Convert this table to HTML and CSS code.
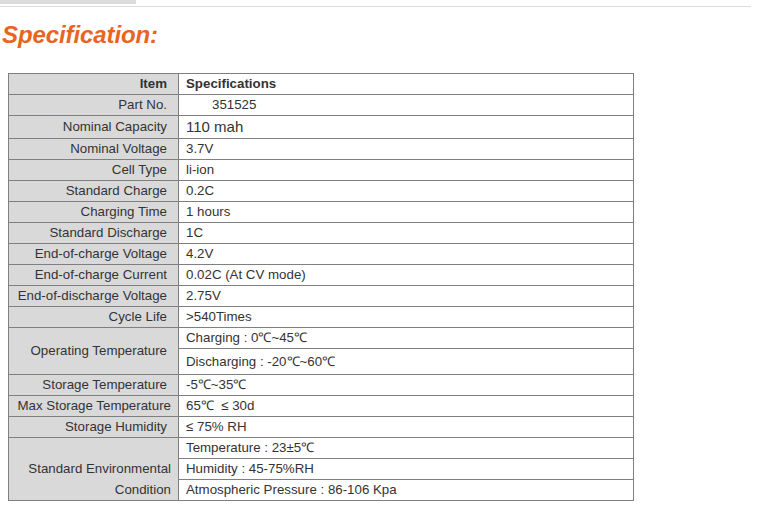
FILE: index.html
```html
<!DOCTYPE html>
<html>
<head>
<meta charset="utf-8">
<link rel="stylesheet" href="styles.css">
</head>
<body>
<div class="topbar"></div>
<div class="rule"></div>
<h2 class="title">Specification:</h2>
<table class="spec">
  <colgroup><col class="c-label"><col class="c-value"></colgroup>
  <tr class="r"><th class="lab hd">Item</th><th class="val hd">Specifications</th></tr>
  <tr class="r"><td class="lab">Part No.</td><td class="val"><span class="indent">351525</span></td></tr>
  <tr class="r-big"><td class="lab">Nominal Capacity</td><td class="val big">110 mah</td></tr>
  <tr class="r"><td class="lab">Nominal Voltage</td><td class="val">3.7V</td></tr>
  <tr class="r"><td class="lab">Cell Type</td><td class="val">li-ion</td></tr>
  <tr class="r"><td class="lab">Standard Charge</td><td class="val">0.2C</td></tr>
  <tr class="r"><td class="lab">Charging Time</td><td class="val">1 hours</td></tr>
  <tr class="r"><td class="lab">Standard Discharge</td><td class="val">1C</td></tr>
  <tr class="r"><td class="lab">End-of-charge Voltage</td><td class="val">4.2V</td></tr>
  <tr class="r"><td class="lab">End-of-charge Current</td><td class="val">0.02C (At CV mode)</td></tr>
  <tr class="r"><td class="lab">End-of-discharge Voltage</td><td class="val">2.75V</td></tr>
  <tr class="r"><td class="lab">Cycle Life</td><td class="val">&gt;540Times</td></tr>
  <tr class="r"><td class="lab" rowspan="2">Operating Temperature</td><td class="val">Charging : 0℃~45℃</td></tr>
  <tr class="r-tall"><td class="val">Discharging : -20℃~60℃</td></tr>
  <tr class="r"><td class="lab">Storage Temperature</td><td class="val">-5℃~35℃</td></tr>
  <tr class="r"><td class="lab wide">Max Storage Temperature</td><td class="val">65℃&nbsp; ≤ 30d</td></tr>
  <tr class="r"><td class="lab">Storage Humidity</td><td class="val">≤ 75% RH</td></tr>
  <tr class="r"><td class="lab env" rowspan="3">Standard Environmental Condition</td><td class="val">Temperature : 23±5℃</td></tr>
  <tr class="r"><td class="val">Humidity : 45-75%RH</td></tr>
  <tr class="r"><td class="val">Atmospheric Pressure : 86-106 Kpa</td></tr>
</table>
</body>
</html>
```
FILE: styles.css
```css
html, body {
  margin: 0;
  padding: 0;
  background: #ffffff;
}
body {
  font-family: "Liberation Sans", Arial, sans-serif;
  color: #333333;
}
.topbar {
  width: 136px;
  height: 4px;
  background: #dcdcdc;
}
.rule {
  margin-top: 2px;
  width: 751px;
  height: 1px;
  background: #dddddd;
}
.title {
  margin: 0;
  padding: 14px 0 0 2px;
  height: 34px;
  font-family: "Liberation Sans", Arial, sans-serif;
  font-size: 24px;
  line-height: 28px;
  font-weight: bold;
  font-style: italic;
  color: #e8661c;
  letter-spacing: -0.1px;
}
.spec {
  margin: 18px 0 0 8px;
  border-collapse: collapse;
  width: 625px;
  table-layout: fixed;
  font-size: 13.3px;
}
.c-label { width: 170px; }
.c-value { width: 455px; }
.spec th, .spec td {
  border: 1px solid #7f7f7f;
  padding: 0;
  line-height: 20px;
  vertical-align: middle;
}
.r th, .r td { height: 20px; }
.r-big td { height: 22px; }
.r-tall td { height: 25px; }
.lab {
  background: #d9d9d9;
  text-align: right;
  padding-right: 11px !important;
  white-space: nowrap;
}
.lab.wide { padding-right: 7px !important; }
.val {
  text-align: left;
  padding-left: 7px !important;
  background: #ffffff;
}
.hd { font-weight: bold; }
.big { font-size: 15px; }
.indent { padding-left: 26px; }
.env {
  white-space: normal;
  vertical-align: bottom !important;
  line-height: 21px !important;
  padding-left: 10px !important;
  padding-right: 7px !important;
}
```
